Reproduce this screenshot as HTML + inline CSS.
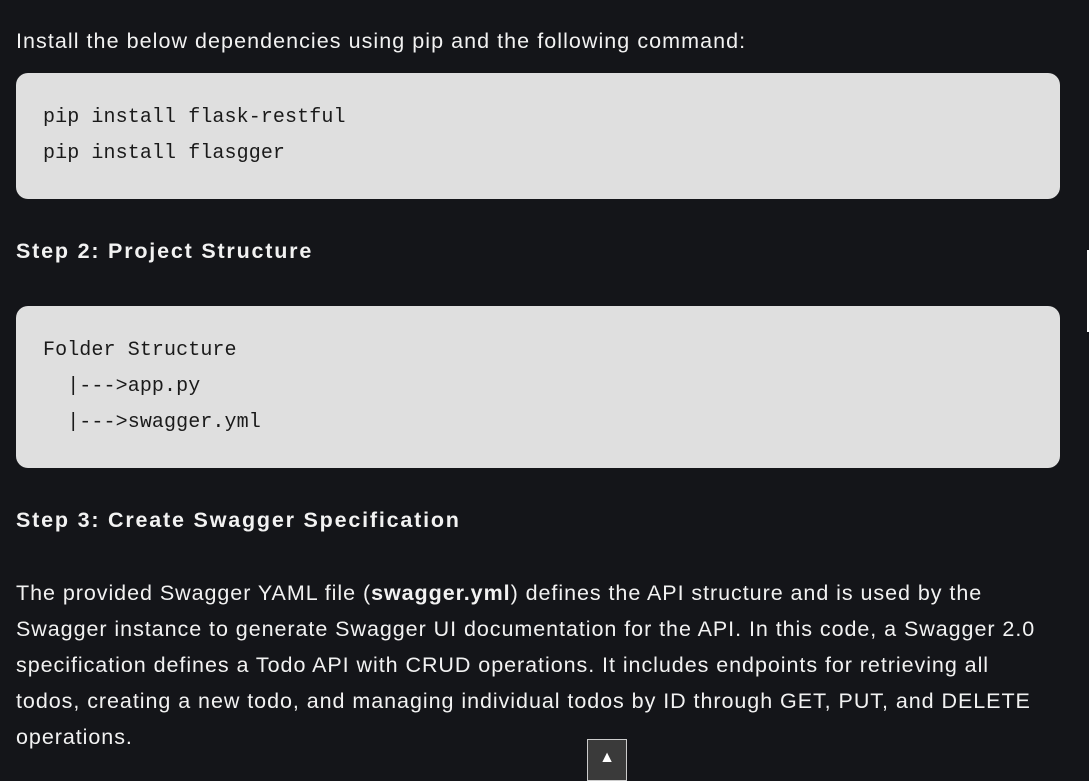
<!DOCTYPE html>
<html><head><style>
body{margin:0;background:#141519;width:1089px;height:775px;overflow:hidden;position:relative;font-family:"Liberation Sans",sans-serif;color:#f2f2f2}
.t{position:absolute;left:16px;font-size:21.5px;letter-spacing:0.95px;white-space:nowrap}
.b{font-weight:bold;letter-spacing:1.8px}
.code{position:absolute;left:16px;width:1044px;background:#dfdfdf;border-radius:12px;font-family:"Liberation Mono",monospace;font-size:20px;letter-spacing:0.1px;color:#1a1a1a;box-sizing:border-box;padding-left:27px}
.code div{height:36px;line-height:36px}
</style></head><body>
<div class="t" style="top:29px;letter-spacing:1.05px">Install the below dependencies using pip and the following command:</div>
<div class="code" style="top:73px;height:126px"><div style="margin-top:27px">pip install flask-restful</div><div>pip install flasgger</div></div>
<div class="t b" style="top:239px">Step 2: Project Structure</div>
<div class="code" style="top:306px;height:162px"><div style="margin-top:27px">Folder Structure</div><div>&nbsp;&nbsp;|---&gt;app.py</div><div>&nbsp;&nbsp;|---&gt;swagger.yml</div></div>
<div class="t b" style="top:508px">Step 3: Create Swagger Specification</div>
<div class="t" style="top:575px;line-height:36px">The provided Swagger YAML file (<b>swagger.yml</b>) defines the API structure and is used by the<br>Swagger instance to generate Swagger UI documentation for the API. In this code, a Swagger 2.0<br>specification defines a Todo API with CRUD operations. It includes endpoints for retrieving all<br>todos, creating a new todo, and managing individual todos by ID through GET, PUT, and DELETE<br>operations.</div>
<div style="position:absolute;left:587px;top:739px;width:38px;height:40px;background:#3a3a3a;border:1px solid #ccc;color:#fff;text-align:center;font-size:16px;line-height:36px">▲</div>
<div style="position:absolute;left:1087px;top:250px;width:2px;height:82px;background:#fff"></div>
</body></html>
